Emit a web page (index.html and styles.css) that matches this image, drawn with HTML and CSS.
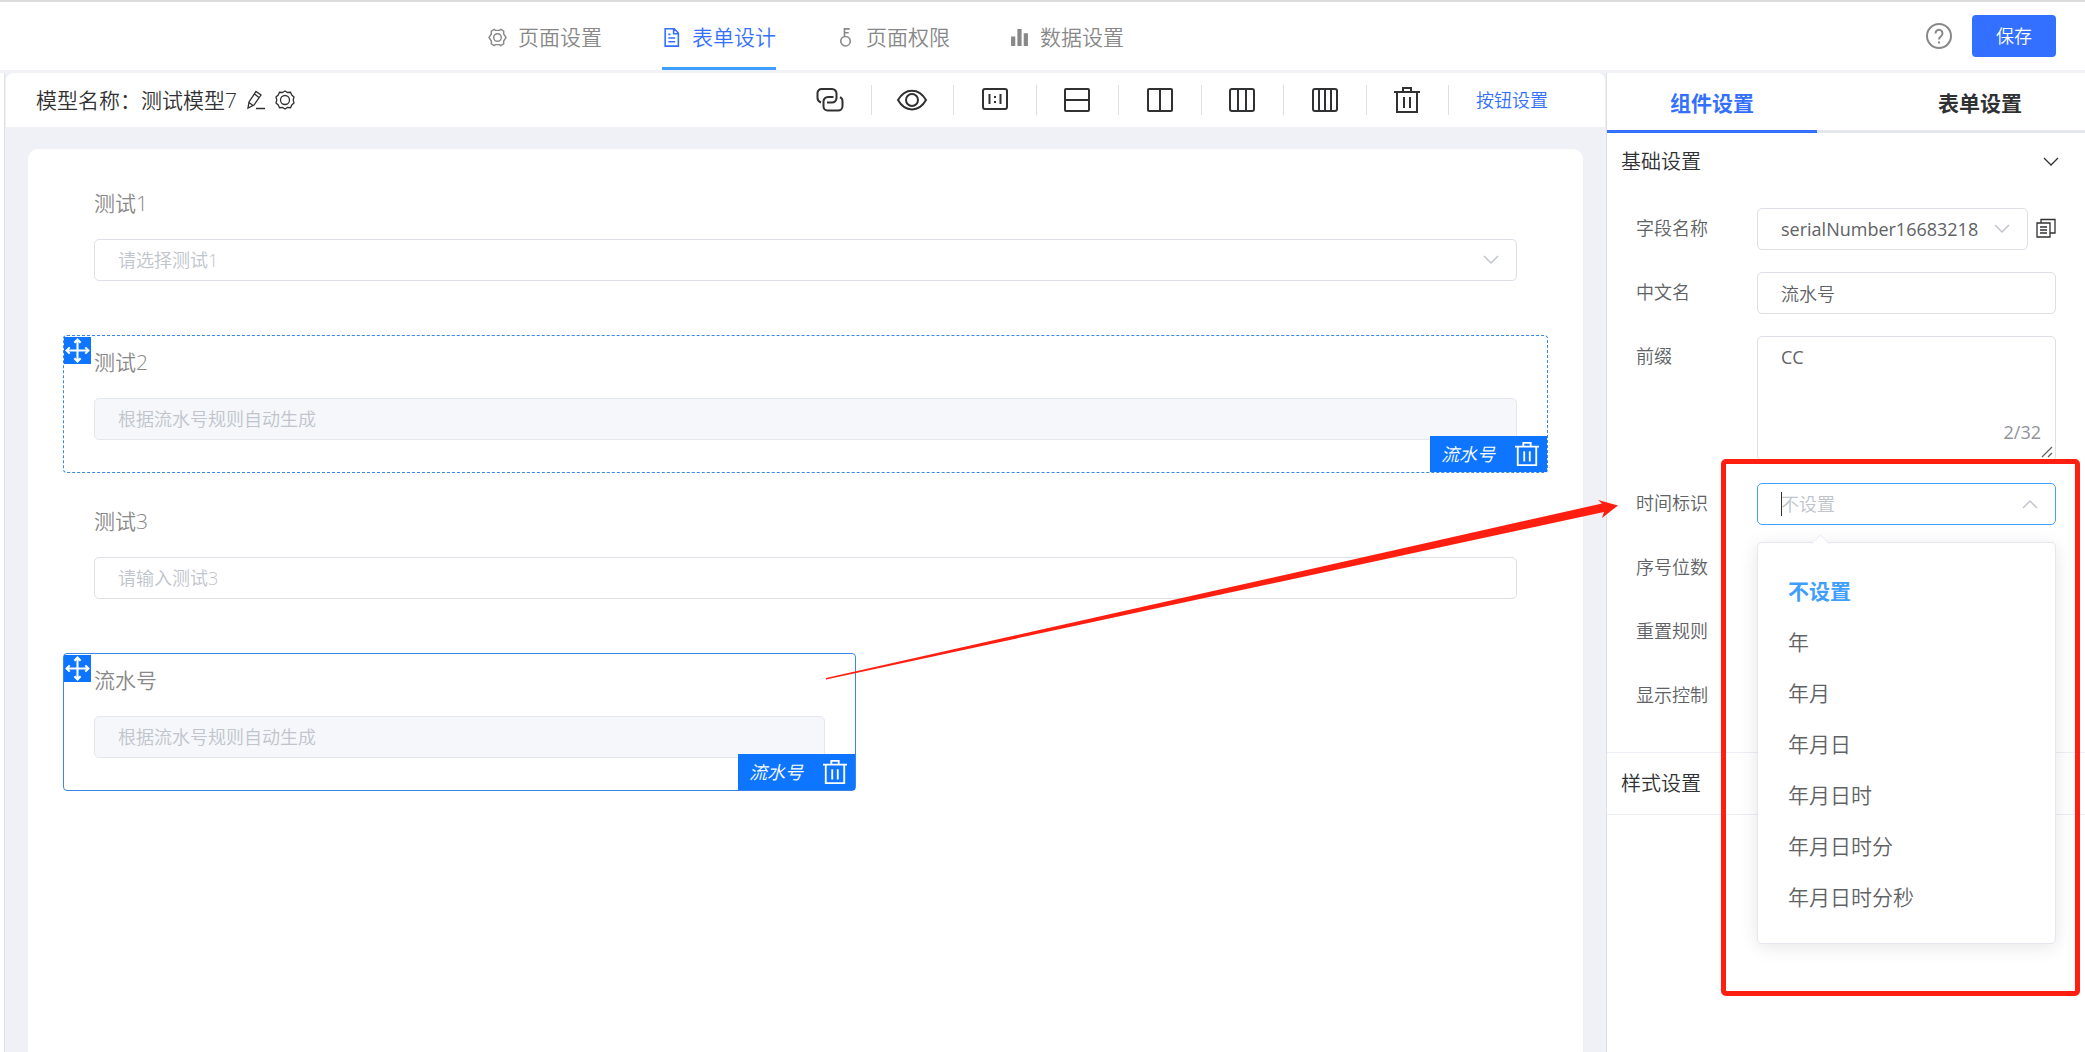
FILE: index.html
```html
<!DOCTYPE html>
<html lang="zh-CN">
<head>
<meta charset="utf-8">
<title>表单设计</title>
<link rel="stylesheet" href="styles.css">
</head>
<body>
<svg class="sprite" aria-hidden="true">
  <symbol id="trash" viewBox="0 0 26 26"><path d="M0 5h26M3 5v20h20V5M9 5V1h8v4M10 10v11M16 10v11"/></symbol>
  <symbol id="move" viewBox="0 0 24 24"><path d="M12 2v20M2 12h20M9 4.500l3-3 3 3M9 19.500l3 3 3-3M4.500 9l-3 3 3 3M19.500 9l3 3-3 3"/></symbol>
  <symbol id="down" viewBox="0 0 16 10"><path d="M1 1l7 7 7-7"/></symbol>
</svg>
<div class="page">
  <header class="topbar">
    <nav class="nav">
      <a class="nav-item" href="#page"><svg class="nav-icon" viewBox="0 0 20 20"><path d="M6.500 1.500 8 2.500h4l1.500-1 3 1.800v3L19 10l-2.500 3.700v3l-3 1.800-1.500-1H8l-1.500 1-3-1.800v-3L1 10l2.500-3.700v-3z"/><circle cx="10" cy="10" r="4"/></svg>页面设置</a>
      <a class="nav-item active" href="#form"><svg class="nav-icon" viewBox="0 0 18 18"><path d="M3 .7h8.500l4 4v12.500H3zM11 1v4.500h4.500M6 6h2M6 9.500h6.500M6 13h6.500"/></svg>表单设计</a>
      <a class="nav-item" href="#auth"><svg class="nav-icon" viewBox="0 0 18 18"><circle cx="9" cy="12.500" r="4.500"/><path d="M8 8V.8h5M8 4.500h4"/></svg>页面权限</a>
      <a class="nav-item" href="#data"><svg class="nav-icon solid" viewBox="0 0 18 18"><path d="M1 8h4v9H1zM7 1h4v16H7zM13 5h4v12h-4z"/></svg>数据设置</a>
    </nav>
    <div class="top-actions">
      <button class="icon-btn" type="button" aria-label="帮助"><svg class="help" viewBox="0 0 26 26"><circle cx="13" cy="13" r="12"/><path d="M9.500 10.500a3.500 3.500 0 1 1 5.500 2.700c-1.300 1-2 1.600-2 3.300M13 18.500v2"/></svg></button>
      <button class="save" type="button">保存</button>
    </div>
  </header>
  <div class="body">
    <main class="workspace">
      <div class="toolbar">
        <h1 class="model">模型名称：测试模型7</h1>
        <button class="icon-btn" type="button" aria-label="编辑"><svg class="mini" viewBox="0 0 20 20"><path d="M2 18l1-6L10 1.500l5 3.500-7 10zM8.500 4l4.500 3.500M3 12.500l4 3M10 18.500h9"/></svg></button>
        <button class="icon-btn" type="button" aria-label="设置"><svg class="mini" viewBox="0 0 20 20"><path d="M7.500 2.500 10 1l2.500 1.500 3-.2 1.300 2.700L19 7l-.8 3 .8 3-2.200 2-1.300 2.700-3-.2L10 19l-2.500-1.500-3 .2L3.200 15 1 13l.8-3L1 7l2.200-2 1.300-2.700z"/><circle cx="10" cy="10" r="4.500"/></svg></button>
        <div class="tools">
          <button class="tool" type="button" aria-label="关联"><svg viewBox="0 0 28 28"><path d="M5 16.500C2.500 15.500 1.500 14 1.500 12V7a4 4 0 0 1 4-4H16a4.500 4.500 0 0 1 4.500 4.500V12a4.500 4.500 0 0 1-4.500 4.500h-5M17.500 11h-5.500A4.500 4.500 0 0 0 7.500 15.500V20.500A4 4 0 0 0 11.500 24.500H22a4.500 4.500 0 0 0 4.500-4.500V15c0-2-.8-3-2.500-3.800"/></svg></button>
          <button class="tool" type="button" aria-label="预览"><svg class="wide" viewBox="0 0 30 28"><path d="M1 14C8 1.500 22 1.500 29 14 22 26.500 8 26.500 1 14z"/><circle cx="15" cy="14" r="6"/></svg></button>
          <button class="tool" type="button" aria-label="比例"><svg viewBox="0 0 28 28"><rect x="2" y="3" width="24" height="20" rx="2"/><path d="M8.500 8v10M19.500 8v10M14 10v2M14 15v2"/></svg></button>
          <button class="tool" type="button" aria-label="一列"><svg viewBox="0 0 28 28"><rect x="2" y="3" width="24" height="22" rx="1"/><path d="M2 14h24"/></svg></button>
          <button class="tool" type="button" aria-label="两列"><svg viewBox="0 0 28 28"><rect x="2" y="3" width="24" height="22" rx="1"/><path d="M14 3v22"/></svg></button>
          <button class="tool" type="button" aria-label="三列"><svg viewBox="0 0 28 28"><rect x="2" y="3" width="24" height="22" rx="2"/><path d="M10 3v22M18 3v22"/></svg></button>
          <button class="tool" type="button" aria-label="四列"><svg viewBox="0 0 28 28"><rect x="2" y="3" width="24" height="22" rx="2"/><path d="M8 3v22M14 3v22M20 3v22"/></svg></button>
          <button class="tool" type="button" aria-label="清空"><svg class="bin"><use href="#trash"/></svg></button>
        </div>
        <button class="link-btn" type="button">按钮设置</button>
      </div>
      <form class="sheet">
        <div class="item">
          <label class="item-label" for="t1">测试1</label>
          <div class="select-wrap">
            <select class="control placeholder" id="t1"><option>请选择测试1</option></select>
            <svg class="chevron"><use href="#down"/></svg>
          </div>
        </div>
        <div class="item dashed">
          <label class="item-label" for="t2">测试2</label>
          <input class="control" id="t2" placeholder="根据流水号规则自动生成" disabled>
          <span class="handle"><svg><use href="#move"/></svg></span>
          <div class="tag"><em>流水号</em><button class="icon-btn" type="button" aria-label="删除"><svg class="tag-bin"><use href="#trash"/></svg></button></div>
        </div>
        <div class="item">
          <label class="item-label" for="t3">测试3</label>
          <input class="control" id="t3" placeholder="请输入测试3">
        </div>
        <div class="item selected">
          <label class="item-label" for="t4">流水号</label>
          <input class="control" id="t4" placeholder="根据流水号规则自动生成" disabled>
          <span class="handle"><svg><use href="#move"/></svg></span>
          <div class="tag"><em>流水号</em><button class="icon-btn" type="button" aria-label="删除"><svg class="tag-bin"><use href="#trash"/></svg></button></div>
        </div>
      </form>
    </main>
    <aside class="panel">
      <div class="tabs">
        <button class="tab active" type="button">组件设置</button>
        <button class="tab" type="button">表单设置</button>
      </div>
      <button class="section" type="button">基础设置<svg class="chevron-dark"><use href="#down"/></svg></button>
      <form class="props">
        <div class="row">
          <label class="row-label" for="f1">字段名称</label>
          <div class="select-wrap">
            <select class="control latin" id="f1"><option>serialNumber16683218</option></select>
            <svg class="chevron"><use href="#down"/></svg>
          </div>
          <button class="icon-btn copy" type="button" aria-label="复制"><svg class="mini" viewBox="0 0 20 20"><path d="M1 5h13v14H1zM5 5V1.500h14V15h-5M4 9h7M4 12h7M4 15h7"/></svg></button>
        </div>
        <div class="row">
          <label class="row-label" for="f2">中文名</label>
          <input class="control" id="f2" value="流水号">
        </div>
        <div class="row">
          <label class="row-label" for="f3">前缀</label>
          <div class="area-wrap">
            <textarea class="control area latin" id="f3" maxlength="32">CC</textarea>
            <span class="count latin">2/32</span>
            <svg class="grip" viewBox="0 0 12 12"><path d="M1 11L11 1M7 11l4-4"/></svg>
          </div>
        </div>
        <div class="row">
          <label class="row-label" for="f4">时间标识</label>
          <div class="select-wrap open">
            <input class="control" id="f4" role="combobox" aria-expanded="true" aria-controls="formats" placeholder="不设置">
            <span class="caret"></span>
            <svg class="chevron"><use href="#down"/></svg>
            <ul class="menu" id="formats" role="listbox">
              <li class="option active" role="option" aria-selected="true">不设置</li>
              <li class="option" role="option">年</li>
              <li class="option" role="option">年月</li>
              <li class="option" role="option">年月日</li>
              <li class="option" role="option">年月日时</li>
              <li class="option" role="option">年月日时分</li>
              <li class="option" role="option">年月日时分秒</li>
            </ul>
          </div>
        </div>
        <div class="row"><span class="row-label">序号位数</span></div>
        <div class="row"><span class="row-label">重置规则</span></div>
        <div class="row"><span class="row-label">显示控制</span></div>
      </form>
      <button class="section lined" type="button">样式设置</button>
      <div class="frame"></div>
    </aside>
  </div>
  <svg class="arrow" viewBox="0 0 794 182" aria-hidden="true"><path d="M1 179L777 4.500 773 1l20 5.500L777 19l2-6L1 180.500z"/></svg>
</div>
</body>
</html>
```
FILE: styles.css
```css
* { box-sizing: border-box; }

body {
  margin: 0;
  background: #fff;
  color: #303133;
  font: 350 18px/24px "Open Sans", "Noto Sans CJK SC", sans-serif;
}

button, input, select, textarea { font: inherit; color: inherit; }

button {
  padding: 0;
  border: 0;
  background: none;
  cursor: pointer;
}

svg {
  display: block;
  fill: none;
  stroke: currentColor;
  stroke-width: 2;
}

.sprite { position: absolute; width: 0; height: 0; }

.page {
  position: relative;
  display: flex;
  flex-direction: column;
  min-height: 100vh;
}

.topbar {
  display: flex;
  justify-content: space-between;
  height: 73px;
  padding: 0 29px 0 488px;
  border-top: 2px solid #ddd;
  border-bottom: 3px solid #f0f2f5;
}

.nav { display: flex; gap: 60px; }

.nav-item {
  display: flex;
  align-items: center;
  gap: 11px;
  padding-top: 5px;
  border-bottom: 3px solid transparent;
  color: #888;
  font-size: 21px;
  text-decoration: none;
}

.nav-item.active { color: #3370ff; border-color: #409eff; }
.nav-icon { width: 19px; height: 19px; stroke-width: 1.5; }
.nav-icon.solid { fill: currentColor; stroke: none; }

.top-actions {
  display: flex;
  align-items: center;
  gap: 20px;
}

.help { width: 26px; height: 26px; color: #888; }

.save {
  width: 84px;
  height: 42px;
  border-radius: 4px;
  background: #3370ff;
  color: #fff;
}

.body { display: flex; flex: 1; }

.workspace {
  display: flex;
  flex: 1;
  flex-direction: column;
  min-width: 0;
  margin-left: 4px;
  padding: 0 1px;
  border-left: 1px solid #dcdfe6;
  background: #f0f1f6;
}

.toolbar {
  display: flex;
  align-items: center;
  gap: 9px;
  height: 54px;
  padding: 0 28px 0 30px;
  border-radius: 8px 8px 0 0;
  background: #fff;
}

.model { margin: 0; font-size: 21px; font-weight: inherit; }
.mini { width: 20px; height: 20px; stroke-width: 1.3; }

.tools {
  display: grid;
  grid-template-columns: repeat(8, 1fr);
  width: 660px;
  margin-left: auto;
}

.tool {
  display: flex;
  align-items: center;
  justify-content: center;
  height: 30px;
  border-right: 1px solid #dcdfe6;
}

.tool svg { width: 28px; height: 28px; }
.tool .wide { width: 30px; }
.tool .bin { width: 26px; height: 26px; }

.link-btn { margin: 0 29px 0 18px; color: #3370ff; }

.sheet {
  display: flex;
  flex: 1;
  flex-direction: column;
  gap: 21px;
  margin: 22px 22px 0;
  padding: 27px 35px;
  border-radius: 10px 10px 0 0;
  background: #fff;
}

.item {
  position: relative;
  height: 138px;
  padding: 14px 30px 0;
  border: 1px solid transparent;
  border-radius: 4px;
}

.item.dashed { border: 1px dashed #3a86e8; }
.item.selected { width: 53.4%; border-color: #3a86e8; }

.item-label {
  display: block;
  height: 48px;
  color: #888;
  font-size: 21px;
}

.control {
  display: block;
  width: 100%;
  height: 42px;
  padding: 0 23px;
  border: 1px solid #dcdfe6;
  border-radius: 5px;
  outline: 0;
  background: #fff;
  appearance: none;
}

.control::placeholder, .control.placeholder { color: #c0c4cc; opacity: 1; }
.control:disabled { border-color: #e4e7ed; background: #f5f7fa; }
.latin { font-weight: 400; }

.select-wrap { position: relative; flex: 1; min-width: 0; }

.chevron {
  position: absolute;
  top: 16px;
  right: 18px;
  width: 16px;
  height: 10px;
  color: #c0c4cc;
  stroke-width: 1.5;
}

.open .chevron { transform: rotate(180deg); }

.handle {
  position: absolute;
  top: 1px;
  left: 0;
  width: 27px;
  height: 27px;
  padding: 1px;
  background: #0d75ff;
  color: #fff;
}

.handle svg { width: 25px; height: 25px; }

.tag {
  position: absolute;
  right: 0;
  bottom: 0;
  display: flex;
  align-items: center;
  justify-content: space-between;
  width: 117px;
  height: 36px;
  padding: 0 8px 0 11px;
  background: #0d75ff;
  color: #fff;
}

.tag-bin { width: 24px; height: 24px; }

.panel {
  position: relative;
  flex: none;
  width: 479px;
  border-left: 1px solid #dcdfe6;
}

.tabs {
  display: flex;
  justify-content: space-between;
  height: 60px;
  background: linear-gradient(#e4e7ed, #e4e7ed) bottom / 100% 3px no-repeat;
}

.tab {
  width: 210px;
  border-bottom: 3px solid transparent;
  padding-top: 3px;
  font-size: 21px;
  font-weight: 700;
}

.tab.active { color: #3370ff; border-color: #3370ff; }

.section {
  display: flex;
  align-items: center;
  justify-content: space-between;
  width: 100%;
  height: 58px;
  padding: 0 26px 0 14px;
  font-size: 20px;
}

.section.lined {
  height: 63px;
  border-top: 1px solid #ebeef5;
  border-bottom: 1px solid #ebeef5;
}

.chevron-dark { width: 16px; height: 10px; stroke-width: 1.3; }

.props {
  display: flex;
  flex-direction: column;
  gap: 22px;
  padding: 17px 29px 35px;
  color: #606266;
}

.row {
  display: flex;
  align-items: flex-start;
  min-height: 42px;
}

.row-label {
  flex: none;
  width: 121px;
  line-height: 41px;
}

.row > .control { flex: 1; min-width: 0; }
.copy { padding: 10px 0 0 8px; color: #303133; }

.area-wrap { position: relative; flex: 1; }
.area { height: 125px; padding-top: 8px; resize: none; }

.count {
  position: absolute;
  right: 15px;
  bottom: 17px;
  color: #909399;
}

.grip {
  position: absolute;
  right: 3px;
  bottom: 3px;
  width: 12px;
  height: 12px;
  stroke-width: 1.3;
}

.open .control { border-color: #409eff; }

.caret {
  position: absolute;
  top: 9px;
  left: 24px;
  width: 1px;
  height: 24px;
  background: #303133;
}

.menu {
  position: absolute;
  z-index: 1;
  top: 59px;
  left: 0;
  right: 0;
  margin: 0;
  padding: 23px 0 20px;
  border: 1px solid #e4e7ed;
  border-radius: 5px;
  background: #fff;
  box-shadow: 0 3px 18px rgba(0, 0, 0, .1);
  list-style: none;
}

.menu::before {
  content: "";
  position: absolute;
  top: -6px;
  left: 56px;
  width: 12px;
  height: 12px;
  border: 1px solid #ebeef5;
  border-right: 0;
  border-bottom: 0;
  background: #fff;
  transform: rotate(45deg);
}

.option {
  padding: 0 30px;
  font-size: 21px;
  line-height: 51px;
}

.option.active { color: #409eff; font-weight: 700; }

.frame {
  position: absolute;
  z-index: 2;
  top: 386px;
  right: 5px;
  width: 359px;
  height: 537px;
  border: 5px solid #ff1f10;
  border-radius: 5px;
  pointer-events: none;
}

.arrow {
  position: absolute;
  z-index: 3;
  top: 499px;
  left: 825px;
  width: 794px;
  height: 182px;
  fill: #ff1f10;
  stroke: none;
  pointer-events: none;
}
```
